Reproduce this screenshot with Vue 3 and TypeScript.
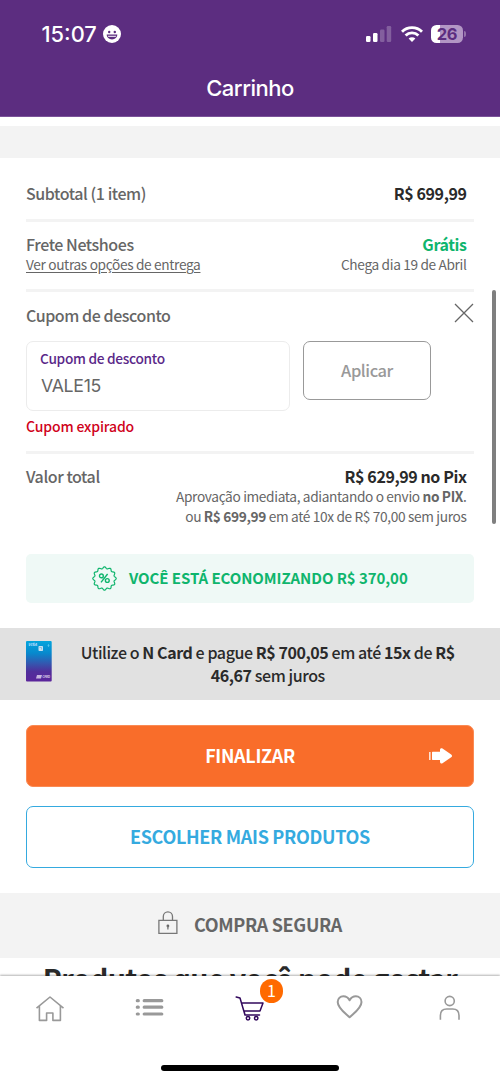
<script setup lang="ts">
import { ref } from 'vue'

interface Bar { x: number; y: number; h: number; on: boolean }

const bars: Bar[] = [
  { x: 0, y: 10, h: 6, on: true },
  { x: 7, y: 7, h: 9, on: true },
  { x: 14, y: 3.5, h: 12.5, on: false },
  { x: 20.7, y: 0, h: 16, on: false },
]
const coupon = ref('VALE15')
const cartCount = 1

const sealPoints = 12
const seal = (() => {
  let d = ''
  for (let i = 0; i <= 144; i++) {
    const a = (i / 144) * Math.PI * 2
    const r = 10.8 + 0.9 * Math.cos(a * sealPoints)
    d += `${i ? 'L' : 'M'}${(12.5 + r * Math.sin(a)).toFixed(2)} ${(12.5 - r * Math.cos(a)).toFixed(2)}`
  }
  return d + 'Z'
})()
</script>

<template>
  <div class="screen">
    <header class="top">
      <div class="status">
        <span class="time">15:07</span>
        <svg class="smile" width="18" height="18" viewBox="0 0 18 18">
          <circle cx="9" cy="9" r="9" fill="#fff" />
          <circle cx="6.2" cy="7" r="1.2" fill="#5c2d80" />
          <circle cx="11.8" cy="7" r="1.2" fill="#5c2d80" />
          <path d="M3.7 9.6h10.6c0 3-2.3 4.8-5.3 4.8s-5.3-1.8-5.3-4.8z" fill="#5c2d80" />
          <path d="M4.8 10.7h8.4l-.5 1.2H5.3z" fill="#fff" opacity=".8" />
        </svg>
        <svg class="signal" width="26" height="16" viewBox="0 0 26 16">
          <rect v-for="b in bars" :key="b.x" :x="b.x" :y="b.y" width="4.5" :height="b.h" rx="1.2" fill="#fff" :opacity="b.on ? 1 : 0.24" />
        </svg>
        <svg class="wifi" width="22" height="16" viewBox="0 0 22 16" fill="none" stroke="#fff" stroke-width="2.9">
          <path d="M1 5.7a14.3 14.3 0 0 1 20 0" />
          <path d="M4.6 9.5a9.2 9.2 0 0 1 12.8 0" />
          <path d="M11 16 7.6 12.6a4.9 4.9 0 0 1 6.8 0z" fill="#fff" stroke="none" />
        </svg>
        <div class="battery"><span>26</span></div>
        <i class="nub"></i>
      </div>
      <h1>Carrinho</h1>
    </header>

    <main>
      <div class="strip"></div>
      <div class="summary">
        <section class="row subtotal">
          <span class="label">Subtotal (1 item)</span>
          <span class="value">R$ 699,99</span>
        </section>
        <section class="row shipping">
          <div>
            <div class="label">Frete Netshoes</div>
            <a class="small link">Ver outras opções de entrega</a>
          </div>
          <div class="right">
            <div class="value free">Grátis</div>
            <div class="small">Chega dia 19 de Abril</div>
          </div>
        </section>
        <section class="coupon">
          <div class="coupon-head">
            <span class="label">Cupom de desconto</span>
            <svg width="20" height="20" viewBox="0 0 20 20" fill="none" stroke="#666" stroke-width="1.3">
              <path d="M1 1 19 19M19 1 1 19" />
            </svg>
          </div>
          <div class="coupon-form">
            <div class="field">
              <span class="field-label">Cupom de desconto</span>
              <span class="field-value">{{ coupon }}</span>
            </div>
            <button class="apply">Aplicar</button>
          </div>
          <div class="error">Cupom expirado</div>
        </section>
        <section class="total">
          <span class="label">Valor total</span>
          <div class="right">
            <div class="value">R$ 629,99 no Pix</div>
            <div class="small lead">Aprovação imediata, adiantando o envio <b>no PIX</b>.</div>
            <div class="small">ou <b>R$ 699,99</b> em até 10x de R$ 70,00 sem juros</div>
          </div>
        </section>
        <div class="saving">
          <svg width="25" height="25" viewBox="0 0 25 25" fill="none" stroke="#0fb56d" stroke-width="1.2">
            <path :d="seal" stroke-linejoin="round" />
            <g stroke-width="1.4">
              <circle cx="9.4" cy="9.9" r="1.9" /><circle cx="15.3" cy="14.5" r="1.9" />
              <path d="M15.6 8 9 16.4" />
            </g>
          </svg>
          <span>VOCÊ ESTÁ ECONOMIZANDO R$ 370,00</span>
        </div>
      </div>
      <div class="ncard">
        <svg class="card" width="26" height="41" viewBox="0 0 26 41">
          <defs>
            <linearGradient id="cardFill" x1="0" y1="0" x2="0" y2="1">
              <stop offset="0" stop-color="#05a5dd" /><stop offset=".3" stop-color="#0789cd" />
              <stop offset=".55" stop-color="#3358b0" /><stop offset=".75" stop-color="#502f9b" />
              <stop offset="1" stop-color="#5b259b" />
            </linearGradient>
          </defs>
          <rect width="25.7" height="40.5" rx="1" fill="url(#cardFill)" />
          <text x="2" y="5" font-size="4.2" font-weight="700" font-style="italic" fill="#bdf" textLength="9">VISA</text>
          <rect x="12.5" y="5" width="4.5" height="5" rx=".7" fill="#c7e1f1" />
          <path d="M13.5 6.5h2v2" stroke="#69a9cf" stroke-width=".6" fill="none" />
          <path d="M22.5 3v3M21.5 4.5h2" stroke="#5ac4ee" stroke-width=".7" />
          <path d="M11 34h5l-1 3.5h-5z" fill="#c7b5df" />
          <text x="16.3" y="37.3" font-size="3.8" font-weight="700" fill="#c7b5df" textLength="8">CARD</text>
        </svg>
        <p>Utilize o <b>N Card</b> e pague <b>R$ 700,05</b> em até <b>15x</b> de <b>R$</b><br /><b>46,67</b> sem juros</p>
      </div>
      <div class="actions">
        <button class="primary">
          <span>FINALIZAR</span>
          <svg width="24" height="16" viewBox="0 0 24 16" fill="#fff">
            <path d="M.2 4h1.3v8H.2zM4 3.8h7V2c0-1.5 1.3-2.2 2.5-1.4l8.7 6c1.1.8 1.1 1.8 0 2.6L13.5 15.200c-1.200.8-2.500.1-2.500-1.400v-1.800H4c-.7 0-1-.4-1-1V4.800c0-.6.3-1 1-1z" />
          </svg>
        </button>
        <button class="secondary"><span>ESCOLHER MAIS PRODUTOS</span></button>
      </div>
      <div class="secure">
        <svg width="20" height="24" viewBox="0 0 20 24" fill="none" stroke="#777" stroke-width="1.3">
          <path d="M.9 9.4h18v13H.9zM5.3 9.4V5.500a4.600 4.600 0 0 1 9.200 0v3.900" />
          <circle cx="9.900" cy="15" r="1.400" fill="#666" stroke="none" /><path d="M9.900 15v3.400" />
        </svg>
        <span>COMPRA SEGURA</span>
      </div>
      <h2>Produtos que você pode gostar</h2>
    </main>
    <div class="scrollbar"></div>

    <nav>
      <div class="tabs">
        <div class="tab">
          <svg width="30" height="28" viewBox="0 0 30 28" fill="none" stroke="#999" stroke-width="1.6" stroke-linejoin="round">
            <path d="M1.500 14.200 15 3l13.500 11.200M4.400 12v14.400h7.200V19h6.300v7.400h7.500V12" />
          </svg>
        </div>
        <div class="tab">
          <svg width="30" height="28" viewBox="0 0 30 28" fill="none" stroke="#999" stroke-width="3.2" stroke-linecap="round">
            <path d="M2.300 6.700h1M9.200 6.700H26.800M2.300 13.200h1M9.200 13.200H26.800M2.300 20h1M9.200 20H26.800" />
          </svg>
        </div>
        <div class="tab">
          <svg width="30" height="28" viewBox="0 0 30 28" fill="none" stroke="#32085c" stroke-width="1.5" stroke-linecap="round" stroke-linejoin="round">
            <path d="M1.200 3 5 4 10 21H24.500M6.600 9H28L25 17H9M10 21 9 17" />
            <circle cx="13" cy="24.200" r="1.700" /><circle cx="21.200" cy="24.200" r="1.700" />
          </svg>
          <span class="badge">{{ cartCount }}</span>
        </div>
        <div class="tab">
          <svg width="30" height="28" viewBox="0 0 30 28" fill="none" stroke="#999" stroke-width="2" stroke-linejoin="round">
            <path d="M14.600 23.300C10 19 2.700 14.200 2.700 8 2.700 4.600 5.200 2.300 8.300 2.300c2.600 0 5 1.500 6.300 4 1.300-2.500 3.700-4 6.300-4 3.100 0 5.600 2.300 5.600 5.700 0 6.200-7.300 11-11.900 15.300z" />
          </svg>
        </div>
        <div class="tab">
          <svg width="30" height="28" viewBox="0 0 30 28" fill="none" stroke="#999" stroke-width="1.6">
            <circle cx="14.700" cy="7" r="4.600" />
            <path d="M5.400 25.800v-4.300c0-4 2.500-6.500 6.300-6.500h6c3.800 0 6.300 2.500 6.300 6.500v4.300" />
          </svg>
        </div>
      </div>
      <div class="home-bar"></div>
    </nav>
  </div>
</template>

<style>
body { margin: 0; background: #fff; }
</style>

<style scoped>
* { box-sizing: border-box; }
.screen {
  position: relative; width: 500px; height: 1082px; overflow: hidden;
  display: flex; flex-direction: column; background: #fff; color: #666;
  font-family: "Noto Sans CJK SC", "Noto Sans", sans-serif;
}
svg { display: block; flex: none; }
button { font: inherit; padding: 0; margin: 0; }
.top { height: 117px; flex: none; background: #5c2d80; border-bottom: 1px solid #7b5399; color: #fff; font-family: Inter, sans-serif; }
.status { display: flex; align-items: center; height: 67px; padding-left: 41.5px; }
.time { font-size: 21.8px; font-weight: 500; line-height: 24px; width: 61.5px; white-space: nowrap; }
.signal { margin-left: 245px; }
.wifi { margin-left: 8.5px; }
.battery { margin-left: 8.5px; width: 32px; height: 18px; border-radius: 5.5px; background: linear-gradient(90deg, #fff 9px, #b296c4 9px); display: flex; align-items: center; justify-content: center; }
.battery span { color: #5c2d80; font-size: 16.5px; font-weight: 700; line-height: 18px; letter-spacing: -.3px; }
.nub { width: 2px; height: 6px; margin-left: 1px; border-radius: 0 2px 2px 0; background: #9473aa; }
h1 { margin: 7px 0 0; text-align: center; font-size: 22px; font-weight: 500; line-height: 28px; letter-spacing: -.5px; }
main { flex: 1; min-height: 0; overflow: hidden; padding-top: 8.5px; }
.strip { height: 32px; background: #f3f3f3; }
.summary { padding: 0 26px; }
.label { font-weight: 500; font-size: 16px; line-height: 24px; letter-spacing: -.43px; white-space: nowrap; }
.value { font-weight: 700; font-size: 16px; line-height: 24px; letter-spacing: -.41px; color: #2a2a2a; white-space: nowrap; }
.small { font-size: 13.7px; line-height: 19.5px; letter-spacing: -.35px; display: block; white-space: nowrap; }
.right { text-align: right; display: flex; flex-direction: column; align-items: flex-end; }
.row, .total { display: flex; justify-content: space-between; padding-right: 7.5px; }
.subtotal { height: 64.5px; padding-top: 23px; box-shadow: inset 0 -3px #f3f3f3; }
.shipping { height: 70px; padding-top: 10px; box-shadow: inset 0 -3px #f3f3f3; }
.shipping .small { margin-top: -.7px; }
.shipping .value { color: #0fb56d; }
.link { text-decoration: underline; text-underline-offset: 1.5px; }
.coupon { height: 162px; box-shadow: inset 0 -3px #f3f3f3; padding-top: 11px; }
.coupon-head { display: flex; justify-content: space-between; height: 38px; }
.coupon-form { display: flex; align-items: flex-start; gap: 13px; }
.field { width: 264px; height: 70px; border: 1px solid #ececec; border-radius: 7px; padding: 6px 0 0 13px; display: flex; flex-direction: column; }
.field-label { font-size: 13.7px; line-height: 20px; letter-spacing: -.3px; font-weight: 500; color: #5a2889; }
.field-value { font: 400 17.7px/24px Inter, sans-serif; letter-spacing: -.3px; margin: 6px 0 0 1px; }
.apply { width: 128px; height: 59px; border: 1px solid #999; border-radius: 7px; background: #fff; color: #999; font-weight: 500; font-size: 16.5px; line-height: 24px; letter-spacing: -.45px; padding-bottom: 1px; }
.error { color: #d0021b; font-size: 14px; font-weight: 500; line-height: 20px; letter-spacing: -.15px; margin-top: 5px; }
.total { height: 100px; padding-top: 10px; }
.lead { margin-top: -.7px; }
.saving { height: 49px; border-radius: 5px; background: #eff9f6; color: #0fb56d; display: flex; align-items: center; padding-left: 66px; font-size: 15px; font-weight: 700; letter-spacing: -.07px; white-space: nowrap; }
.saving span { margin: -2px 0 0 12px; }
.ncard { margin-top: 25px; height: 72px; background: #e1e1e1; display: flex; padding: 13px 0 0 26px; color: #2a2a2a; }
.ncard p { margin: .4px 0 0; flex: 1; padding-right: 16.5px; text-align: center; font-size: 16px; line-height: 23px; letter-spacing: -.42px; font-weight: 500; white-space: nowrap; }
.actions { padding: 25px 26px 0; display: flex; flex-direction: column; gap: 19px; }
.primary, .secondary { height: 62px; border-radius: 7px; font-size: 18px; font-weight: 700; letter-spacing: -.32px; display: flex; align-items: center; justify-content: center; position: relative; }
.primary span, .secondary span { margin-top: -2px; }
.primary { background: #f96d2a; border: 1px solid #fa8a54; color: #fff; }
.primary svg { position: absolute; right: 20.5px; top: 21.5px; }
.secondary { background: #fff; border: 1.3px solid #35aadf; color: #35aadf; }
.secure { margin-top: 25px; height: 65px; background: #f3f3f3; display: flex; align-items: center; padding-left: 157.5px; font-weight: 700; font-size: 18px; line-height: 24px; letter-spacing: -.34px; white-space: nowrap; }
.secure svg { margin-top: -5px; }
.secure span { margin: -3px 0 0 16.5px; }
h2 { margin: 3.2px 0 0; text-align: center; color: #2a2a2a; font-size: 28.5px; line-height: 34px; font-weight: 700; letter-spacing: -.6px; white-space: nowrap; }
.scrollbar { position: absolute; right: 4px; top: 290px; width: 4px; height: 234px; border-radius: 2px; background: #7f7f7f; }
nav { height: 106.5px; flex: none; background: #fff; position: relative; box-shadow: 0 -1px 2px rgba(0, 0, 0, .3); display: flex; flex-direction: column; align-items: center; }
.tabs { width: 100%; display: flex; padding-top: 18px; height: 89px; }
.tab { flex: 1; display: flex; justify-content: center; position: relative; }
.badge { position: absolute; left: 59.7px; top: -14.5px; width: 23.5px; height: 23.5px; border-radius: 50%; background: #ff6a00; color: #fff; font: 400 16px/22.5px "Noto Sans CJK SC", sans-serif; text-align: center; }
.home-bar { width: 178px; height: 6.5px; border-radius: 4px; background: #000; }
</style>
